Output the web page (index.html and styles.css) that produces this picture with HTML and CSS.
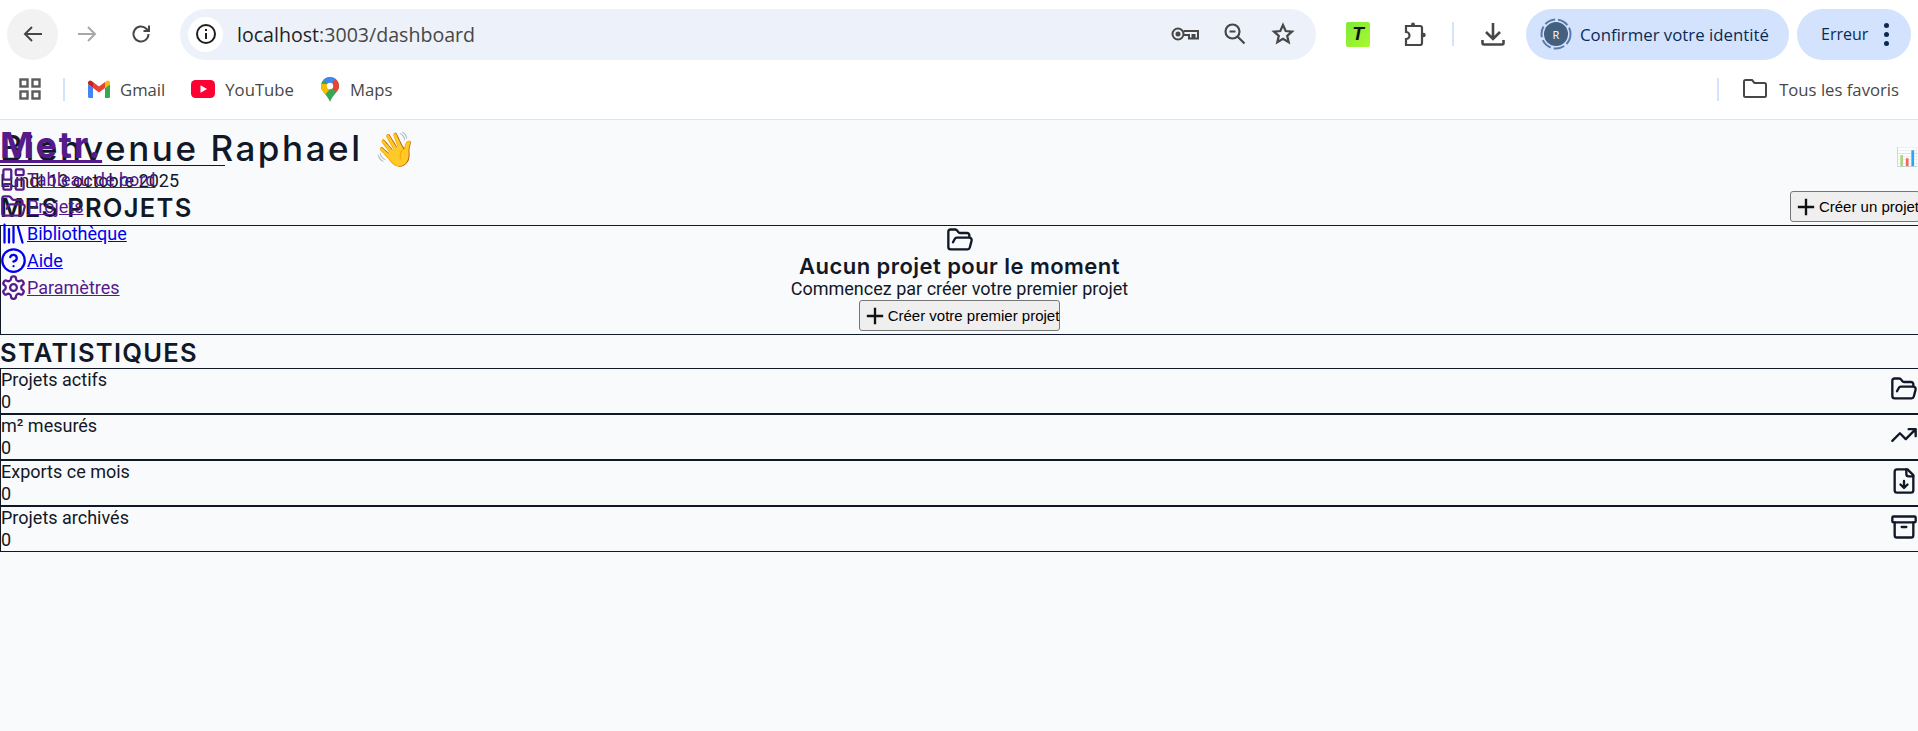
FILE: index.html
```html
<!DOCTYPE html>
<html lang="fr">
<head>
    <meta charset="UTF-8">
    <meta name="viewport" content="width=device-width, initial-scale=1.0">
    <title>Dashboard</title>
    <link rel="stylesheet" href="styles.css">
</head>
<body>
    <div class="browser">
        <div class="toolbar">
            <div class="nav-btn nav-btn-active">
                <svg width="24" height="24" viewBox="0 0 24 24" fill="none" stroke="#474747" stroke-width="2"><path d="M21 12H4M11 5l-7 7 7 7"/></svg>
            </div>
            <div class="nav-btn">
                <svg width="24" height="24" viewBox="0 0 24 24" fill="none" stroke="#a8a8a8" stroke-width="2"><path d="M3 12h17M13 5l7 7-7 7"/></svg>
            </div>
            <div class="nav-btn">
                <svg width="24" height="24" viewBox="0 0 24 24" fill="none" stroke="#474747" stroke-width="2"><path d="M19.5 12a7.5 7.5 0 1 1-2.2-5.3L19.5 9M20 3.500V9h-5.500"/></svg>
            </div>
            <div class="omnibox">
                <div class="site-info">
                    <svg width="24" height="24" viewBox="0 0 24 24" fill="none" stroke="#1f1f1f" stroke-width="2"><circle cx="12" cy="12" r="9"/><path d="M12 11v6M12 7v2"/></svg>
                </div>
                <span class="url"><span class="url-host">localhost</span>:3003/dashboard</span>
                <div class="omni-icons">
                    <svg width="28" height="24" viewBox="0 0 28 24" fill="none" stroke="#474747" stroke-width="2"><circle cx="7" cy="12" r="5.500"/><circle cx="7" cy="12" r="1.500" fill="#474747"/><path d="M12.500 9H27v7.500h-3.500V13h-2v3.500H18V13h-5.500"/></svg>
                    <svg width="24" height="24" viewBox="0 0 24 24" fill="none" stroke="#474747" stroke-width="2.200"><circle cx="9.500" cy="9.500" r="7"/><path d="M14.500 14.500l7 7M6.500 9.500h6"/></svg>
                    <svg width="24" height="24" viewBox="0 0 24 24" fill="none" stroke="#474747" stroke-width="2.200"><path d="M12 3l2.700 6 6.300.6-4.800 4.200 1.500 6.400L12 16.800l-5.700 3.400 1.500-6.400L3 9.600 9.300 9z"/></svg>
                </div>
            </div>
            <div class="ext-logo"><span>T</span></div>
            <div class="puzzle">
                <svg width="24" height="26" viewBox="0 0 24 26" fill="none" stroke="#474747" stroke-width="2.200"><path d="M4 5h14a2 2 0 0 1 2 2v15a2 2 0 0 1-2 2H4v-6a3.500 3.500 0 0 0 0-7z"/><circle cx="11" cy="3.500" r="2" fill="#474747" stroke="none"/><circle cx="21.500" cy="14" r="2.200" fill="#474747" stroke="none"/></svg>
            </div>
            <div class="tb-sep"></div>
            <div class="download">
                <svg width="26" height="26" viewBox="0 0 26 26" fill="none" stroke="#474747" stroke-width="2.600"><path d="M13 2v15M6 11l7 7 7-7M2.500 19v3a1.500 1.500 0 0 0 1.500 1.500h18a1.500 1.500 0 0 0 1.500-1.500v-3"/></svg>
            </div>
            <div class="pill pill-identity">
                <div class="avatar">
                    <svg class="avatar-ring" width="32" height="32" viewBox="0 0 32 32" fill="none" stroke="#5b7aa8" stroke-width="2" stroke-dasharray="11 3"><circle cx="16" cy="16" r="14.500"/></svg>
                    <span>R</span>
                </div>
                <span>Confirmer votre identité</span>
            </div>
            <div class="pill pill-error">
                <span>Erreur</span>
                <span class="kebab"><i></i><i></i><i></i></span>
            </div>
        </div>
        <div class="bookmarks">
            <svg class="apps" width="22" height="22" viewBox="0 0 22 22" fill="none" stroke="#5c5c5c" stroke-width="2.400"><rect x="1.500" y="1.500" width="7" height="7"/><rect x="13.500" y="1.500" width="7" height="7"/><rect x="1.500" y="13.500" width="7" height="7"/><rect x="13.500" y="13.500" width="7" height="7"/></svg>
            <div class="bm-sep"></div>
            <div class="bm">
                <svg width="22" height="18" viewBox="0 0 22 18"><path fill="#4285f4" d="M0 4v12.500A1.500 1.500 0 0 0 1.500 18H5V8z"/><path fill="#34a853" d="M17 8v10h3.500a1.500 1.500 0 0 0 1.500-1.500V4z"/><path fill="#ea4335" d="M5 8V2l6 4.500L17 2v6l-6 4.500z"/><path fill="#c5221f" d="M0 2.500V4l5 4V2L3.500.9A2.200 2.200 0 0 0 0 2.500z"/><path fill="#fbbc04" d="M17 2v6l5-4V2.500A2.200 2.200 0 0 0 18.500.9z"/></svg>
                <span>Gmail</span>
            </div>
            <div class="bm">
                <svg width="24" height="18" viewBox="0 0 24 18"><rect width="24" height="18" rx="4.500" fill="#ff0033"/><path fill="#fff" d="M9.500 5.200v7.600L16 9z"/></svg>
                <span>YouTube</span>
            </div>
            <div class="bm">
                <svg width="20" height="25" viewBox="-1 0 20 25">
                    <defs><clipPath id="pin"><path d="M9 0C4 0 0 4 0 9c0 6 6 8 9 16 3-8 9-10 9-16 0-5-4-9-9-9z"/></clipPath></defs>
                    <g clip-path="url(#pin)">
                        <rect x="-1" width="20" height="25" fill="#34a853"/>
                        <path fill="#fbbc04" d="M-1 7l7 0 3 5-6 7-4-3z"/>
                        <path fill="#4285f4" d="M1 2l3-3h10l1 3-6 7-3-3z" />
                        <path fill="#ea4335" d="M15 1l4 3v7l-4 4-6-6z"/>
                    </g>
                    <circle cx="9" cy="9" r="3.200" fill="#fff"/>
                </svg>
                <span>Maps</span>
            </div>
            <div class="bm-right">
                <div class="bm-sep"></div>
                <svg width="24" height="20" viewBox="0 0 24 20" fill="none" stroke="#474747" stroke-width="2"><path d="M1 2.500A1.500 1.500 0 0 1 2.500 1H9l2.500 3h10A1.500 1.500 0 0 1 23 5.500v11a1.500 1.500 0 0 1-1.500 1.500h-19A1.500 1.500 0 0 1 1 16.500z"/></svg>
                <span>Tous les favoris</span>
            </div>
        </div>
    </div>

    <div class="page">
        <aside class="sidebar">
            <div class="sidebar-head">
                <a class="brand visited" href="#">Metr.</a>
            </div>
            <nav class="side-nav">
                <div class="side-item visited">
                    <svg class="ic" viewBox="0 0 24 24"><rect x="3" y="3" width="7" height="9" rx="1"/><rect x="14" y="3" width="7" height="5" rx="1"/><rect x="14" y="12" width="7" height="9" rx="1"/><rect x="3" y="16" width="7" height="5" rx="1"/></svg>
                    <a href="#">Tableau de bord</a>
                </div>
                <div class="side-item visited">
                    <svg class="ic" viewBox="0 0 24 24"><path d="M6 14l1.500-2.900A2 2 0 0 1 9.240 10H20a2 2 0 0 1 1.940 2.500l-1.540 6a2 2 0 0 1-1.950 1.500H4a2 2 0 0 1-2-2V5a2 2 0 0 1 2-2h3.900a2 2 0 0 1 1.690.9l.81 1.200a2 2 0 0 0 1.670.9H18a2 2 0 0 1 2 2v2"/></svg>
                    <a href="#">Projets</a>
                </div>
                <div class="side-item">
                    <svg class="ic" viewBox="0 0 24 24"><path d="M16 6l4 14M12 6v14M8 8v12M4 4v16"/></svg>
                    <a href="#">Bibliothèque</a>
                </div>
                <div class="side-item">
                    <svg class="ic" viewBox="0 0 24 24"><circle cx="12" cy="12" r="10"/><path d="M9.090 9a3 3 0 0 1 5.830 1c0 2-3 3-3 3M12 17h.010"/></svg>
                    <a href="#">Aide</a>
                </div>
                <div class="side-item visited">
                    <svg class="ic" viewBox="0 0 24 24"><path d="M12.220 2h-.440a2 2 0 0 0-2 2v.180a2 2 0 0 1-1 1.730l-.430.250a2 2 0 0 1-2 0l-.150-.080a2 2 0 0 0-2.730.730l-.220.380a2 2 0 0 0 .730 2.730l.150.100a2 2 0 0 1 1 1.720v.510a2 2 0 0 1-1 1.740l-.150.090a2 2 0 0 0-.730 2.730l.220.380a2 2 0 0 0 2.730.730l.150-.080a2 2 0 0 1 2 0l.430.250a2 2 0 0 1 1 1.730V20a2 2 0 0 0 2 2h.440a2 2 0 0 0 2-2v-.180a2 2 0 0 1 1-1.730l.430-.250a2 2 0 0 1 2 0l.150.080a2 2 0 0 0 2.730-.730l.220-.390a2 2 0 0 0-.730-2.730l-.150-.080a2 2 0 0 1-1-1.740v-.500a2 2 0 0 1 1-1.740l.150-.090a2 2 0 0 0 .730-2.730l-.220-.380a2 2 0 0 0-2.730-.730l-.150.080a2 2 0 0 1-2 0l-.430-.250a2 2 0 0 1-1-1.730V4a2 2 0 0 0-2-2z"/><circle cx="12" cy="12" r="3"/></svg>
                    <a href="#">Paramètres</a>
                </div>
            </nav>
        </aside>

        <main class="main">
            <header class="welcome">
                <div>
                    <h1>Bienvenue Raphael <span class="wave">👋</span></h1>
                    <p class="date">Lundi 13 octobre 2025</p>
                </div>
                <span class="chart-emoji">📊</span>
            </header>

            <section>
                <div class="section-head">
                    <h2>MES PROJETS</h2>
                    <button class="btn">
                        <svg class="ic-plus" viewBox="0 0 24 24"><path d="M5 12h14M12 5v14"/></svg>
                        Créer un projet
                    </button>
                </div>
                <div class="empty">
                    <svg class="ic" viewBox="0 0 24 24"><path d="M6 14l1.500-2.900A2 2 0 0 1 9.240 10H20a2 2 0 0 1 1.940 2.500l-1.540 6a2 2 0 0 1-1.950 1.500H4a2 2 0 0 1-2-2V5a2 2 0 0 1 2-2h3.900a2 2 0 0 1 1.690.9l.81 1.200a2 2 0 0 0 1.670.9H18a2 2 0 0 1 2 2v2"/></svg>
                    <h3>Aucun projet pour le moment</h3>
                    <p>Commencez par créer votre premier projet</p>
                    <button class="btn">
                        <svg class="ic-plus" viewBox="0 0 24 24"><path d="M5 12h14M12 5v14"/></svg>
                        Créer votre premier projet
                    </button>
                </div>
            </section>

            <section>
                <h2>STATISTIQUES</h2>
                <div class="stat">
                    <div><p>Projets actifs</p><p>0</p></div>
                    <svg class="ic" viewBox="0 0 24 24"><path d="M6 14l1.500-2.900A2 2 0 0 1 9.240 10H20a2 2 0 0 1 1.940 2.500l-1.540 6a2 2 0 0 1-1.950 1.500H4a2 2 0 0 1-2-2V5a2 2 0 0 1 2-2h3.900a2 2 0 0 1 1.690.9l.81 1.200a2 2 0 0 0 1.670.9H18a2 2 0 0 1 2 2v2"/></svg>
                </div>
                <div class="stat">
                    <div><p>m² mesurés</p><p>0</p></div>
                    <svg class="ic" viewBox="0 0 24 24"><path d="M22 7l-8.500 8.500-5-5L2 17M16 7h6v6"/></svg>
                </div>
                <div class="stat">
                    <div><p>Exports ce mois</p><p>0</p></div>
                    <svg class="ic" viewBox="0 0 24 24"><path d="M15 2H6a2 2 0 0 0-2 2v16a2 2 0 0 0 2 2h12a2 2 0 0 0 2-2V7z"/><path d="M14 2v4a2 2 0 0 0 2 2h4M12 18v-6M9 15l3 3 3-3"/></svg>
                </div>
                <div class="stat">
                    <div><p>Projets archivés</p><p>0</p></div>
                    <svg class="ic" viewBox="0 0 24 24"><rect x="2" y="3" width="20" height="5" rx="1"/><path d="M4 8v11a2 2 0 0 0 2 2h12a2 2 0 0 0 2-2V8M10 12h4"/></svg>
                </div>
            </section>
        </main>
    </div>
</body>
</html>
```

FILE: styles.css
```css
* {
    box-sizing: border-box;
}

html, body {
    height: 100%;
}

body {
    margin: 0;
    overflow: hidden;
    background: #f9fafb;
    font-family: Roboto, "Liberation Sans", sans-serif;
    color: #111827;
}

/* browser chrome */
.browser {
    height: 120px;
    background: #fff;
    border-bottom: 1px solid #e1e3e6;
    font-family: "Open Sans", Roboto, sans-serif;
}

.toolbar {
    display: flex;
    align-items: center;
    height: 68px;
    padding: 0 7px;
}

.nav-btn {
    display: flex;
    align-items: center;
    justify-content: center;
    flex: none;
    width: 51px;
    height: 51px;
    margin-right: 3px;
    border-radius: 50%;
}

.nav-btn-active {
    background: #f2f2f2;
}

.omnibox {
    display: flex;
    align-items: center;
    flex: none;
    width: 1136px;
    height: 51px;
    margin-left: 11px;
    padding: 0 21px 0 8px;
    border-radius: 26px;
    background: #edf2fa;
}

.site-info {
    display: flex;
    align-items: center;
    justify-content: center;
    width: 35px;
    height: 35px;
    border-radius: 50%;
    background: #fff;
}

.url {
    margin-left: 14px;
    font-size: 19.600px;
    color: #474747;
}

.url-host {
    color: #1f1f1f;
}

.omni-icons {
    display: flex;
    align-items: center;
    gap: 24px;
    margin-left: auto;
}

.ext-logo {
    display: flex;
    align-items: center;
    justify-content: center;
    flex: none;
    width: 24px;
    height: 25px;
    margin-left: 30px;
    border-radius: 2px;
    background: linear-gradient(135deg, #7ee83a, #a8fa2c);
    font: italic 700 19px "Liberation Sans", sans-serif;
    color: #111;
}

.puzzle {
    display: flex;
    margin-left: 32px;
}

.tb-sep {
    flex: none;
    width: 2px;
    height: 24px;
    margin-left: 26px;
    background: #d3e3fd;
}

.download {
    display: flex;
    margin-left: 26px;
}

.pill {
    display: flex;
    align-items: center;
    flex: none;
    height: 51px;
    border-radius: 26px;
    background: #d3e3fd;
    color: #0a2a55;
}

.pill-identity {
    width: 263px;
    margin-left: 20px;
    padding-left: 14px;
    gap: 8px;
    font-size: 16.800px;
}

.pill-error {
    width: 114px;
    margin-left: 8px;
    padding-left: 24px;
    font-size: 16px;
}

.avatar {
    position: relative;
    display: flex;
    align-items: center;
    justify-content: center;
    width: 32px;
    height: 32px;
    font-size: 11px;
    color: #fff;
}

.avatar span {
    display: flex;
    align-items: center;
    justify-content: center;
    width: 24px;
    height: 24px;
    border-radius: 50%;
    background: #44607f;
}

.avatar-ring {
    position: absolute;
    inset: 0;
}

.kebab {
    display: flex;
    flex-direction: column;
    gap: 4px;
    margin-left: 16px;
}

.kebab i {
    width: 5px;
    height: 5px;
    border-radius: 50%;
    background: #0a2a55;
}

.bookmarks {
    display: flex;
    align-items: center;
    height: 42px;
    padding: 0 19px;
    font-size: 16.700px;
    color: #474747;
}

.apps {
    flex: none;
}

.bm-sep {
    width: 2px;
    height: 23px;
    margin: 0 23px 0 22px;
    background: #d3e3fd;
}

.bm {
    display: flex;
    align-items: center;
    gap: 10px;
    margin-right: 26px;
}

.bm-right {
    display: flex;
    align-items: center;
    gap: 12px;
    margin-left: auto;
}

.bm-right .bm-sep {
    margin: 0 12px 0 0;
}

/* page under the chrome */
.page {
    position: relative;
    height: calc(100% - 120px);
    font-size: 18px;
}

.sidebar {
    position: absolute;
    top: 0;
    left: 0;
    width: 225px;
}

.sidebar-head {
    height: 46px;
    border-bottom: 1px solid #111827;
}

.brand {
    font-family: Inter, sans-serif;
    font-size: 36px;
    font-weight: 700;
    line-height: 50px;
    letter-spacing: 1.900px;
    text-decoration-thickness: 3px;
    text-underline-offset: 2px;
}

a {
    color: #0000ee;
}

.side-item {
    display: flex;
    align-items: center;
    height: 27px;
    color: #0000ee;
}

.visited,
.visited a {
    color: #551a8b;
}

.ic {
    flex: none;
    width: 27px;
    height: 27px;
    fill: none;
    stroke: currentColor;
    stroke-width: 2;
    stroke-linecap: round;
    stroke-linejoin: round;
}

.main {
    width: 100%;
}

.welcome {
    display: flex;
    align-items: center;
    justify-content: space-between;
    height: 72px;
}

h1, h2, h3 {
    margin: 0;
    font-family: Inter, sans-serif;
}

h1 {
    padding-top: 4px;
    font-size: 35px;
    font-weight: 500;
    line-height: 48px;
    letter-spacing: 2.550px;
}

.wave {
    font-size: 34px;
    letter-spacing: 0;
}

p {
    margin: 0;
}

.date {
    margin-top: -3px;
    line-height: 22px;
}

.chart-emoji {
    font-size: 18px;
    opacity: 0.8;
}

.section-head {
    display: flex;
    align-items: flex-start;
    justify-content: space-between;
    height: 33px;
}

.section-head h2 {
    margin-top: 1px;
}

h2 {
    font-size: 25.500px;
    font-weight: 600;
    line-height: 30px;
    letter-spacing: 1.300px;
}

.btn {
    display: inline-flex;
    align-items: center;
    flex: none;
    height: 31px;
    padding: 0 0 0 1px;
    border: 1px solid #767676;
    border-radius: 3px;
    background: #efefef;
    font-family: "Liberation Sans", Arial, sans-serif;
    font-size: 15px;
    color: #000;
}

.section-head .btn {
    margin-top: -1px;
    margin-right: -2px;
}

.ic-plus {
    width: 28px;
    height: 28px;
    margin-right: -1px;
    fill: none;
    stroke: #111;
    stroke-width: 2;
}

.empty {
    display: flex;
    flex-direction: column;
    align-items: center;
    height: 110px;
    margin-bottom: 3px;
    border: 1px solid #111827;
    border-right: 0;
}

.empty .ic,
.stat .ic {
    width: 28px;
    height: 28px;
}

.empty p {
    line-height: 22px;
}

h3 {
    font-size: 22px;
    font-weight: 600;
    line-height: 24px;
    letter-spacing: 0.450px;
}

.stat {
    display: flex;
    justify-content: space-between;
    height: 46px;
    border: 1px solid #111827;
    border-right: 0;
    line-height: 22px;
}

.stat .ic {
    margin-top: 6px;
}
```
